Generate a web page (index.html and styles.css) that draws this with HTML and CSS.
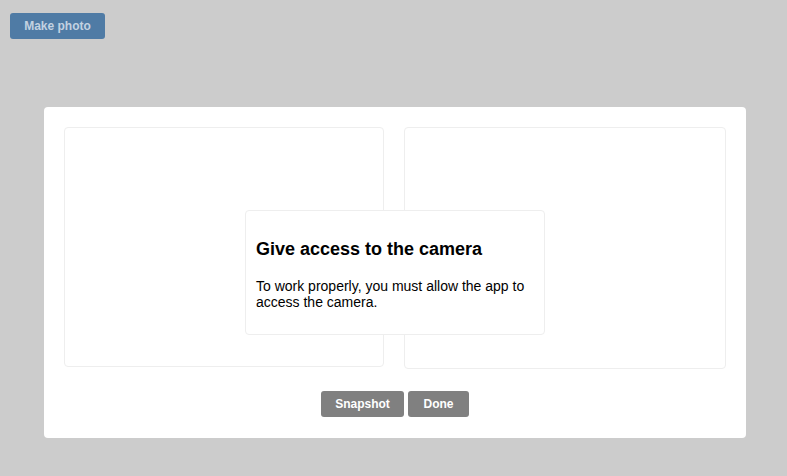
FILE: index.html
```html
<!DOCTYPE html>
<html>
<head>
<meta charset="utf-8">
<link rel="stylesheet" href="styles.css">
</head>
<body>
<div class="page">
  <button class="btn btn-primary">Make photo</button>
</div>
<div class="modal">
  <div class="panels">
    <div class="panel panel-left"></div>
    <div class="panel panel-right"></div>
  </div>
  <div class="actions">
    <button class="btn btn-gray btn-snapshot">Snapshot</button>
    <button class="btn btn-gray btn-done">Done</button>
  </div>
  <div class="dialog">
    <h2 class="dialog-title">Give access to the camera</h2>
    <p class="dialog-text">To work properly, you must allow the app to access the camera.</p>
  </div>
</div>
</body>
</html>
```
FILE: styles.css
```css
html, body {
  margin: 0;
  padding: 0;
  background: #cccccc;
  font-family: "Liberation Sans", Arial, sans-serif;
  height: 100%;
}
.page {
  padding: 13px 10px;
}
.btn {
  font-family: "Liberation Sans", Arial, sans-serif;
  font-size: 12px;
  font-weight: bold;
  height: 26px;
  border: none;
  border-radius: 3px;
  padding: 0;
  cursor: pointer;
  display: inline-block;
}
.btn-primary {
  background: #4f7ba5;
  color: #c3d2e1;
  width: 95px;
}
.btn-gray {
  background: #808080;
  color: #ffffff;
}
.btn-snapshot {
  width: 83px;
}
.btn-done {
  width: 61px;
}
.modal {
  position: absolute;
  left: 44px;
  top: 107px;
  width: 702px;
  height: 331px;
  box-sizing: border-box;
  background: #ffffff;
  border-radius: 4px;
  padding: 20px;
}
.panels {
  display: flex;
  gap: 20px;
  align-items: flex-start;
}
.panel {
  border: 1px solid #eeeeee;
  border-radius: 4px;
  box-sizing: border-box;
}
.panel-left {
  width: 320px;
  height: 240px;
}
.panel-right {
  width: 322px;
  height: 242px;
}
.actions {
  display: flex;
  justify-content: center;
  gap: 4px;
  margin-top: 22px;
}
.dialog {
  position: absolute;
  left: 201px;
  top: 103px;
  width: 300px;
  height: 125px;
  box-sizing: border-box;
  background: #ffffff;
  border: 1px solid #eeeeee;
  border-radius: 4px;
  padding: 0 10px;
}
.dialog-title {
  font-size: 18px;
  font-weight: bold;
  color: #000;
  margin: 28px 0 0 0;
  line-height: 21px;
}
.dialog-text {
  font-size: 14px;
  color: #000;
  margin: 18px 0 0 0;
  line-height: 16px;
}
```
